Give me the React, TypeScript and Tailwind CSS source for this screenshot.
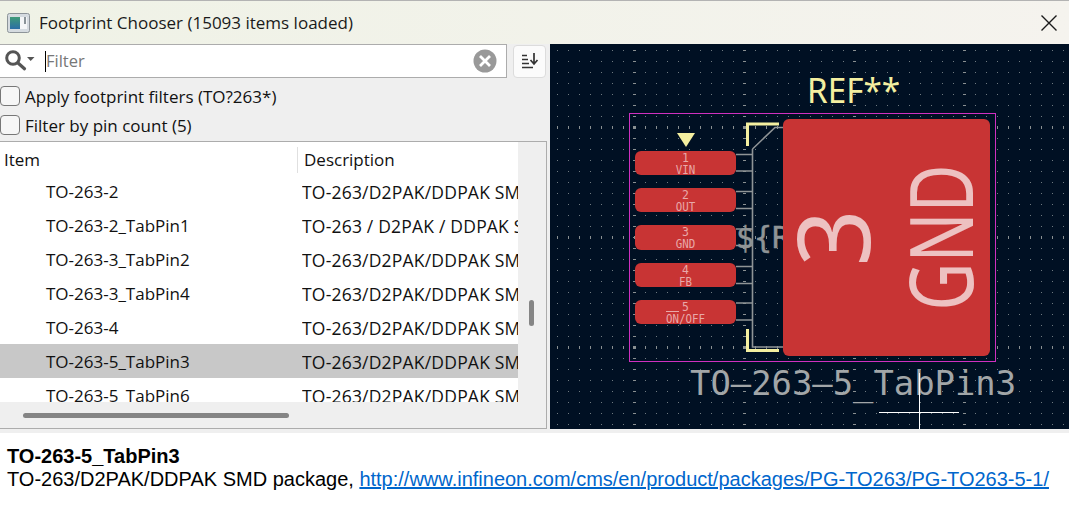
const uiFont = "font-['Open_Sans',sans-serif]";

const rows = [
  { name: 'TO-263-2', desc: 'TO-263/D2PAK/DDPAK SMD package, http://www.infineon.com' },
  { name: 'TO-263-2_TabPin1', desc: 'TO-263 / D2PAK / DDPAK SMD package' },
  { name: 'TO-263-3_TabPin2', desc: 'TO-263/D2PAK/DDPAK SMD package, http://www.infineon.com' },
  { name: 'TO-263-3_TabPin4', desc: 'TO-263/D2PAK/DDPAK SMD package, http://www.infineon.com' },
  { name: 'TO-263-4', desc: 'TO-263/D2PAK/DDPAK SMD package, http://www.infineon.com' },
  { name: 'TO-263-5_TabPin3', desc: 'TO-263/D2PAK/DDPAK SMD package, http://www.infineon.com', selected: true },
  { name: 'TO-263-5_TabPin6', desc: 'TO-263/D2PAK/DDPAK SMD package, http://www.infineon.com' },
];

const pads = [
  { y: 151, h: 24, num: '1', label: 'VIN' },
  { y: 188, h: 24, num: '2', label: 'OUT' },
  { y: 225, h: 25, num: '3', label: 'GND' },
  { y: 263, h: 24, num: '4', label: 'FB' },
  { y: 300, h: 24, num: '5', label: 'ON/OFF' },
];

const mono = "'DejaVu Sans Mono', monospace";

function AppIcon() {
  return (
    <svg width="23" height="20" viewBox="0 0 23 20">
      <defs>
        <linearGradient id="appIconFill" x1="0" y1="0" x2="0" y2="1">
          <stop offset="0" stopColor="#3f9a78" />
          <stop offset="1" stopColor="#2b6ea6" />
        </linearGradient>
      </defs>
      <rect x="0.5" y="0.5" width="22" height="19" rx="2" fill="#d5dbe0" stroke="#8d9499" />
      <rect x="3" y="4" width="10" height="12" fill="url(#appIconFill)" />
      <rect x="13" y="4" width="7" height="12" fill="#f4f6f7" />
      <rect x="17" y="4" width="2" height="7" fill="#8a9398" />
    </svg>
  );
}

function SearchIcon() {
  return (
    <svg width="32" height="24" viewBox="0 0 32 24" fill="none">
      <circle cx="10" cy="9" r="6.3" stroke="#555" strokeWidth="3" />
      <path d="M15 14 L21.5 19.8" stroke="#555" strokeWidth="3.2" strokeLinecap="round" />
      <path d="M24 8 H31.5 L27.7 12 Z" fill="#555" />
    </svg>
  );
}

function ClearIcon() {
  return (
    <svg width="24" height="24" viewBox="0 0 24 24">
      <circle cx="12" cy="12" r="11.5" fill="#999" />
      <path d="M7 7 L17 17 M17 7 L7 17" stroke="#fff" strokeWidth="2.8" />
    </svg>
  );
}

function SortIcon() {
  return (
    <svg width="18" height="18" viewBox="0 0 18 18" fill="none" stroke="#333" strokeWidth="1.5">
      <path d="M1 3.5 H6 M1 7.5 H7 M1 11.5 H8 M1 15.5 H12" />
      <path d="M13 1 V11.5 M9.5 8 L13 12 L16.5 8" strokeWidth="1.7" />
    </svg>
  );
}

function CloseIcon() {
  return (
    <svg width="16" height="16" viewBox="0 0 16 16" fill="none" stroke="#1a1a1a" strokeWidth="1.4">
      <path d="M0.5 0.5 L15.5 15.5 M15.5 0.5 L0.5 15.5" />
    </svg>
  );
}

function Checkbox({ label }: { label: string }) {
  return (
    <label className="flex h-[29px] items-center gap-[5px]">
      <span className="h-[20px] w-[20px] shrink-0 rounded-[4px] border border-[#777] bg-[#f6f6f6]" />
      <span className="pt-[2px] text-[17px] text-[#111]">{label}</span>
    </label>
  );
}

function Preview() {
  const rowYs: number[] = [];
  for (let y = 50; y < 429; y += 11) rowYs.push(y);
  const colXs: number[] = [];
  for (let x = 557; x < 1069; x += 11) colXs.push(x);
  return (
    <svg className="h-[385px] w-[519px] shrink-0" viewBox="550 44 519 385">
      <defs>
        <pattern id="grid" x="550" y="39" width="11" height="11" patternUnits="userSpaceOnUse">
          <rect x="7" y="0" width="1" height="1" fill="#6f7a80" />
        </pattern>
      </defs>
      <rect x="550" y="44" width="519" height="385" fill="#001023" />
      <rect x="550" y="44" width="519" height="385" fill="url(#grid)" />
      {[634, 744, 854, 964].map((x) =>
        rowYs.map((y) => <rect key={`c${x}-${y}`} x={x - 1} y={y} width="3" height="1" fill="#8a9092" />),
      )}
      {[127, 237, 347].map((y) =>
        colXs.map((x) => <rect key={`r${x}-${y}`} x={x} y={y - 1} width="1" height="3" fill="#8a9092" />),
      )}
      <rect x="633" y="126" width="3" height="3" fill="#8a9092" />
      <rect x="743" y="126" width="3" height="3" fill="#8a9092" />
      <rect x="633" y="346" width="3" height="3" fill="#8a9092" />
      <rect x="743" y="346" width="3" height="3" fill="#8a9092" />

      {/* courtyard */}
      <rect x="629.5" y="113.5" width="366" height="248" fill="none" stroke="#d030c0" />

      {/* fab outline */}
      <path
        d="M752.5 149 L775 127.5 H784 M752.5 149 V347 H784 M736 154.5 H752 M736 171 H752 M736 191.5 H752 M736 208.5 H752 M736 229 H752 M736 245.5 H752 M736 266.5 H752 M736 283.5 H752 M736 303 H752 M736 320 H752"
        fill="none"
        stroke="#8f9496"
        strokeWidth="1.6"
      />

      {/* silkscreen */}
      <path d="M779 124 H747.5 V146 M747.5 329 V350.5 H779" fill="none" stroke="#f4efa0" strokeWidth="3" />
      <path d="M677 133 H695 L686 147 Z" fill="#f4efa0" />

      <text x="736" y="248" fontFamily={mono} fontSize="30" fill="#8f9496" stroke="#8f9496" strokeWidth="0.5">
        {'${R'}
      </text>

      {/* pads */}
      {pads.map((p) => (
        <g key={p.num}>
          <rect x="635" y={p.y} width="101" height={p.h} rx="6" fill="#c83434" />
          <text x="685.5" y={p.y + 10.5} textAnchor="middle" fontFamily={mono} fontSize="11.5" fill="#e8a9a9">
            {p.num}
          </text>
          <text
            x="685.5"
            y={p.y + 22.5}
            textAnchor="middle"
            fontFamily={mono}
            fontSize="11.5"
            fill="#e8a9a9"
            textLength={p.label.length * 6.5}
            lengthAdjust="spacingAndGlyphs"
          >
            {p.label}
          </text>
        </g>
      ))}
      <path d="M666 311.5 H679" stroke="#e8a9a9" strokeWidth="1" />

      {/* tab */}
      <rect x="783" y="119" width="207" height="237" rx="6" fill="#c83434" />
      <text
        transform="translate(869.5 238) rotate(-90)"
        textAnchor="middle"
        fontFamily="'Noto Sans', sans-serif"
        fontSize="100"
        fill="#edc1c1"
      >
        3
      </text>
      <text
        transform="translate(973 237.5) rotate(-90)"
        textAnchor="middle"
        fontFamily="'Noto Sans', sans-serif"
        fontSize="88"
        fill="#edc1c1"
        textLength="146"
        lengthAdjust="spacingAndGlyphs"
      >
        GND
      </text>

      <text x="807" y="103" fontFamily="'Noto Sans', sans-serif" fontSize="35" fill="#f4efa0" textLength="93" lengthAdjust="spacingAndGlyphs">
        REF**
      </text>
      <text x="690" y="395" fontFamily={mono} fontSize="34" fill="#a2a6a8" textLength="326" lengthAdjust="spacingAndGlyphs">
        TO–263–5_TabPin3
      </text>

      {/* cursor */}
      <path d="M879 412.5 H959 M919.5 373 V429" stroke="#ffffff" strokeWidth="1" />
    </svg>
  );
}

export default function App() {
  return (
    <div className={`flex h-[505px] w-[1069px] flex-col overflow-hidden bg-white ${uiFont}`}>
      {/* title bar */}
      <div className="flex h-[44px] shrink-0 items-center justify-between border-t border-[#b3b3b3] bg-gradient-to-r from-[#eff2e6] to-[#f5f3ee] pl-[7px] pr-[12px]">
        <div className="flex items-center gap-[9px]">
          <AppIcon />
          <span className="text-[17px] text-[#1a1a1a]">Footprint Chooser (15093 items loaded)</span>
        </div>
        <CloseIcon />
      </div>

      <div className="flex h-[385px] shrink-0">
        {/* left pane */}
        <div className="flex w-[550px] shrink-0 flex-col bg-[#efefef] pr-[3px]">
          <div className="flex h-[34px] shrink-0 items-center gap-[6px]">
            <div className="flex h-[34px] w-[507px] items-center border-y border-r border-[#acacac] bg-white pl-[3px] pr-[9px]">
              <SearchIcon />
              <div className="ml-[10px] h-[21px] w-px bg-black" />
              <span className="flex-1 text-[16.5px] text-[#777]">Filter</span>
              <ClearIcon />
            </div>
            <div className="flex h-[33px] w-[33px] items-center justify-center rounded-[4px] border border-[#dcdcdc] bg-[#fbfbfb]">
              <SortIcon />
            </div>
          </div>

          <div className="mt-[3px] flex shrink-0 flex-col">
            <Checkbox label="Apply footprint filters (TO?263*)" />
            <Checkbox label="Filter by pin count (5)" />
          </div>

          <div className="mt-[2px] flex min-h-0 flex-1 border border-l-0 border-[#acacac]">
            <div className="flex w-[518px] shrink-0 flex-col">
              <div className="h-[260px] overflow-hidden bg-white">
                <div className="flex h-[32px] items-center pt-[4px] text-[17px] text-[#111]">
                  <div className="w-[298px] border-r border-[#e0e0e0] pl-[4px]">Item</div>
                  <div className="pl-[6px]">Description</div>
                </div>
                {rows.map((row) => (
                  <div
                    key={row.name}
                    className={`flex h-[34px] items-center pt-[2px] text-[17px] text-[#111] ${row.selected ? 'bg-[#c8c8c8]' : ''}`}
                  >
                    <div className="w-[302px] shrink-0 pl-[46px]">{row.name}</div>
                    <div className="overflow-hidden whitespace-nowrap text-[17.5px] tracking-[0.2px]">{row.desc}</div>
                  </div>
                ))}
              </div>
              <div className="flex flex-1 items-center pl-[23px]">
                <div className="h-[5px] w-[266px] rounded-full bg-[#858585]" />
              </div>
            </div>
            <div className="flex-1 pl-[11px] pt-[158px]">
              <div className="h-[26px] w-[5px] rounded-full bg-[#858585]" />
            </div>
          </div>
        </div>
        <Preview />
      </div>

      <div className="h-[4px] shrink-0 bg-[#efefef]" />

      {/* info panel */}
      <div className="pl-[7px] pt-[12px] font-['Liberation_Sans',sans-serif] text-[20px] leading-[23px] text-black">
        <div className="font-bold">TO-263-5_TabPin3</div>
        <div className="whitespace-nowrap">
          TO-263/D2PAK/DDPAK SMD package,{' '}
          <a className="text-[#0066cc] underline">http://www.infineon.com/cms/en/product/packages/PG-TO263/PG-TO263-5-1/</a>
        </div>
      </div>
    </div>
  );
}
